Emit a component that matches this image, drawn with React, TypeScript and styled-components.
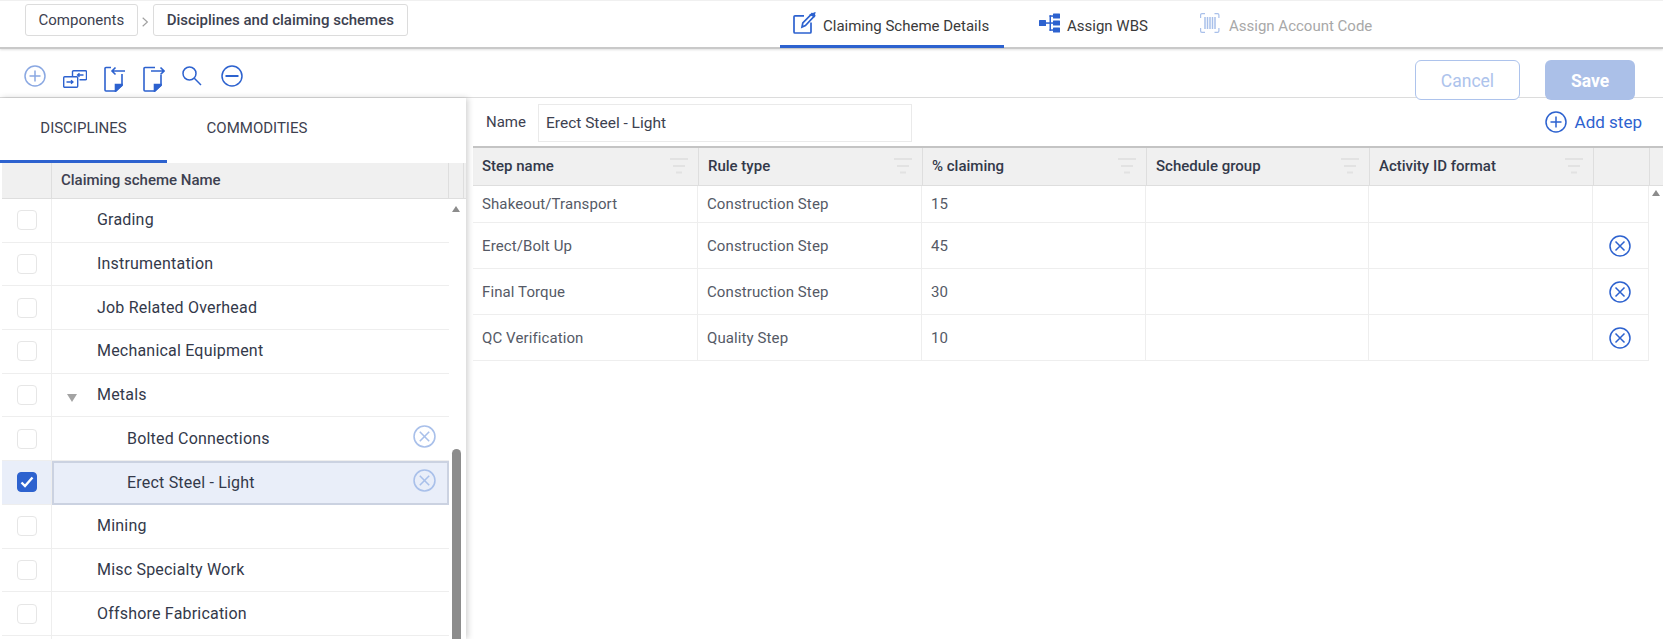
import styled, { createGlobalStyle } from 'styled-components';

const Global = createGlobalStyle`
  html, body {
    margin: 0;
    padding: 0;
    height: 100%;
    overflow: hidden;
    background: #fff;
    font-family: Roboto, 'Liberation Sans', sans-serif;
    color: #333;
  }
  * { box-sizing: border-box; }
  svg { flex: none; }
`;

const Page = styled.div`
  width: 1663px;
  height: 639px;
  overflow: hidden;
  display: flex;
  flex-direction: column;
`;

const TopBar = styled.div`
  height: 49px;
  flex: none;
  display: flex;
  align-items: flex-start;
  padding-left: 25px;
  background: #fff;
  border-top: 1px solid #f0f0f0;
  border-bottom: 2px solid #c9c9c9;
  box-shadow: 0 1px 2px rgba(0, 0, 0, 0.12);
  position: relative;
  z-index: 3;
`;

const Crumbs = styled.div`
  width: 383px;
  display: flex;
  align-items: center;
  margin-top: 3px;
`;

const Crumb = styled.div<{ $current?: boolean }>`
  height: 32px;
  padding: 0 ${p => (p.$current ? 13 : 12.5)}px;
  display: flex;
  align-items: center;
  font-size: 15px;
  font-weight: ${p => (p.$current ? 500 : 400)};
  color: #3d4150;
  border: 1px solid #dcdcdc;
  border-radius: 3px;
  white-space: nowrap;
`;

const CrumbArrow = styled.svg`
  width: 15px;
  height: 12px;
  margin-top: 4px;
`;

const Tabs = styled.div`
  margin-left: 372px;
  display: flex;
  height: 47px;
`;

const Tab = styled.div<{ $active?: boolean; $disabled?: boolean; $width: number; $pad: number }>`
  width: ${p => p.$width}px;
  height: 47px;
  padding: 5px 0 0 ${p => p.$pad}px;
  display: flex;
  align-items: center;
  gap: 7px;
  font-size: 15px;
  color: ${p => (p.$disabled ? '#a8a8a8' : '#3a3a3a')};
  border-bottom: 3px solid ${p => (p.$active ? '#2d62cf' : 'transparent')};
  white-space: nowrap;
`;

const Toolbar = styled.div`
  height: 49px;
  flex: none;
  display: flex;
  align-items: flex-start;
  padding: 12px 28px 0 24px;
  border-bottom: 1px solid #dcdcdc;
`;

const ToolIcons = styled.div`
  display: flex;
  align-items: center;
  gap: 17px;
  height: 30px;

  & > svg:last-child {
    margin-left: 2px;
  }
`;

const Actions = styled.div`
  margin: -1px 0 0 auto;
  display: flex;
  gap: 25px;
  position: relative;
  z-index: 2;
`;

const Cancel = styled.div`
  width: 105px;
  height: 40px;
  padding-top: 1px;
  display: flex;
  align-items: center;
  justify-content: center;
  border: 1px solid #adc3ec;
  border-radius: 6px;
  background: #fff;
  color: #adc3ec;
  font-size: 17.500px;
`;

const Save = styled.div`
  width: 90px;
  height: 40px;
  padding-top: 1px;
  display: flex;
  align-items: center;
  justify-content: center;
  border-radius: 6px;
  background: #abc0e8;
  color: #fff;
  font-size: 17.500px;
  font-weight: 700;
`;

const Main = styled.div`
  flex: 1;
  min-height: 0;
  display: flex;
`;

const LeftPanel = styled.div`
  width: 466px;
  flex: none;
  background: #fff;
  box-shadow: 2px 0 6px rgba(0, 0, 0, 0.18);
  position: relative;
  overflow: hidden;
`;

const SideTabs = styled.div`
  height: 65px;
  display: flex;
`;

const SideTab = styled.div<{ $active?: boolean; $width: number }>`
  width: ${p => p.$width}px;
  display: flex;
  align-items: center;
  justify-content: center;
  padding-bottom: 3px;
  font-size: 15px;
  color: #3d4150;
  border-bottom: 3px solid ${p => (p.$active ? '#2d62cf' : 'transparent')};
`;

const TreeHead = styled.div`
  height: 36px;
  margin-left: 2px;
  display: grid;
  grid-template-columns: 50px 397px 15px;
  background: #f0f0f0;
  border-bottom: 1px solid #dedede;
  font-size: 15px;
  font-weight: 500;
  color: #3d4150;
`;

const HeadCell = styled.div`
  display: flex;
  align-items: center;
  padding: 0 0 1px 9px;
  border-right: 1px solid #dedede;
`;

const TreeBody = styled.div`
  display: flex;
  margin-left: 2px;
`;

const TreeRows = styled.div`
  width: 447px;
`;

const TreeRow = styled.div<{ $selected?: boolean }>`
  height: 43.700px;
  display: grid;
  grid-template-columns: 50px 1fr;
  background: ${p => (p.$selected ? '#e9eef9' : '#fff')};
  border-bottom: 1px solid #eeeeee;
`;

const CheckCell = styled.div`
  display: flex;
  align-items: center;
  justify-content: center;
  border-right: 1px solid #eeeeee;
`;

const Check = styled.div<{ $checked?: boolean }>`
  width: 20px;
  height: 20px;
  border-radius: 4px;
  display: flex;
  align-items: center;
  justify-content: center;
  border: 1px solid ${p => (p.$checked ? '#2d62cf' : '#e6e6e6')};
  background: ${p => (p.$checked ? '#2d62cf' : '#fff')};
`;

const NameCell = styled.div<{ $level: number; $selected?: boolean }>`
  display: flex;
  align-items: center;
  position: relative;
  padding: 0 0 1px ${p => 45 + p.$level * 30 - (p.$selected ? 2 : 0)}px;
  font-size: 16px;
  letter-spacing: 0.2px;
  color: #33394a;
  ${p => p.$selected && 'border: 2px solid #cbd2e1; margin-bottom: -1px;'}
`;

const Caret = styled.span`
  position: absolute;
  left: 15px;
  top: 20px;
  width: 0;
  height: 0;
  border-left: 5px solid transparent;
  border-right: 5px solid transparent;
  border-top: 8px solid #a3a3a3;
`;

const RemoveSlot = styled.span<{ $selected?: boolean }>`
  position: absolute;
  right: ${p => (p.$selected ? 11 : 13)}px;
  top: ${p => (p.$selected ? 6 : 8)}px;
  display: flex;
`;

const ScrollTrack = styled.div`
  flex: 1;
  position: relative;
  height: 450px;
`;

const ScrollArrow = styled.span<{ $top: number; $left: number }>`
  position: absolute;
  top: ${p => p.$top}px;
  left: ${p => p.$left}px;
  width: 0;
  height: 0;
  border-left: 4px solid transparent;
  border-right: 4px solid transparent;
  border-bottom: 6px solid #8c8c8c;
`;

const ScrollThumb = styled.span`
  position: absolute;
  left: 3px;
  top: 250px;
  width: 9px;
  height: 200px;
  border-radius: 5px 5px 0 0;
  background: #8c8c8c;
`;

const RightPanel = styled.div`
  flex: 1;
  min-width: 0;
  margin-left: 7px;
  display: flex;
  flex-direction: column;
`;

const NameRow = styled.div`
  height: 50px;
  display: flex;
  align-items: flex-start;
  padding: 6px 21px 0 0;
  border-bottom: 2px solid #c4c4c4;
`;

const NameLabel = styled.label`
  width: 65px;
  padding: 9px 0 0 13px;
  font-size: 15px;
  color: #3d4150;
`;

const NameInput = styled.div`
  width: 374px;
  height: 38px;
  display: flex;
  align-items: center;
  padding-left: 7px;
  border: 1px solid #eaeaea;
  font-size: 15.500px;
  color: #3d4150;
`;

const AddStep = styled.div`
  margin-left: auto;
  margin-top: 7px;
  display: flex;
  align-items: center;
  gap: 8px;
  font-size: 17px;
  color: #2d62cf;
`;

const GridHead = styled.div`
  height: 38px;
  display: grid;
  grid-template-columns: 226px 224px 224px 223px 224px 56px 1fr;
  background: #f0f0f0;
  border-bottom: 1px solid #dedede;
  font-size: 15px;
  font-weight: 500;
  color: #33394a;
`;

const GridHeadCell = styled.div`
  display: flex;
  align-items: center;
  justify-content: space-between;
  padding: 0 10px 1px 9px;
  border-right: 1px solid #dedede;
`;

const GridBody = styled.div`
  position: relative;
`;

const StepRow = styled.div<{ $height: number }>`
  height: ${p => p.$height}px;
  width: 1176px;
  display: grid;
  grid-template-columns: 225px 224px 224px 223px 224px 56px;
  border-bottom: 1px solid #eeeeee;
  font-size: 15px;
  letter-spacing: 0.1px;
  color: #555a66;
`;

const StepCell = styled.div`
  display: flex;
  align-items: center;
  padding-left: 9px;
  border-right: 1px solid #eeeeee;
`;

const RowAction = styled(StepCell)`
  justify-content: center;
  padding: 0 2px 0 0;
`;

const steps = [
  { name: 'Shakeout/Transport', rule: 'Construction Step', pct: '15', removable: false },
  { name: 'Erect/Bolt Up', rule: 'Construction Step', pct: '45', removable: true },
  { name: 'Final Torque', rule: 'Construction Step', pct: '30', removable: true },
  { name: 'QC Verification', rule: 'Quality Step', pct: '10', removable: true },
];

const tree = [
  { name: 'Grading', level: 0 },
  { name: 'Instrumentation', level: 0 },
  { name: 'Job Related Overhead', level: 0 },
  { name: 'Mechanical Equipment', level: 0 },
  { name: 'Metals', level: 0, caret: true },
  { name: 'Bolted Connections', level: 1, removable: true },
  { name: 'Erect Steel - Light', level: 1, removable: true, selected: true },
  { name: 'Mining', level: 0 },
  { name: 'Misc Specialty Work', level: 0 },
  { name: 'Offshore Fabrication', level: 0 },
  { name: '', level: 0 },
];

const BLUE = '#2d62cf';

function CircleIcon({ kind, color = BLUE, size = 22 }: { kind: 'plus' | 'minus' | 'x'; color?: string; size?: number }) {
  return (
    <svg width={size} height={size} viewBox="0 0 22 22" fill="none" stroke={color} strokeWidth="1.5">
      <circle cx="11" cy="11" r="10" />
      {kind === 'plus' && <path d="M11 5.500v11M5.500 11h11" />}
      {kind === 'minus' && <path d="M4.500 11h13" strokeWidth="2" />}
      {kind === 'x' && <path d="M6.500 6.500l9 9M15.500 6.500l-9 9" />}
    </svg>
  );
}

function FilterIcon() {
  return (
    <svg width="18" height="16" viewBox="0 0 18 16" fill="none" stroke="#e2e2e2" strokeWidth="2">
      <path d="M0 1h18M3 8h12M6 14.500h6" />
    </svg>
  );
}

function DocIcon({ out }: { out?: boolean }) {
  return (
    <svg width="22" height="26" viewBox="0 0 22 26" fill="none" stroke={BLUE} strokeWidth="1.6" style={{ marginTop: 6 }}>
      {out ? (
        <path d="M12 1.500H2a1 1 0 0 0-1 1V24a1 1 0 0 0 1 1h10l6-6V9" />
      ) : (
        <path d="M7 1.500H2a1 1 0 0 0-1 1V24a1 1 0 0 0 1 1h10l6-6V8" />
      )}
      {out ? (
        <path d="M8 5h13M17.500 1.500L21 5l-3.500 3.500" />
      ) : (
        <path d="M21 5H8M11.500 1.500L8 5l3.500 3.500" />
      )}
      <path d="M11.500 25v-6.500H18v1z" fill={BLUE} />
    </svg>
  );
}

function TransferIcon() {
  return (
    <svg width="24" height="18" viewBox="0 0 24 18" fill="none" stroke={BLUE} strokeWidth="1.400" style={{ marginTop: 6 }}>
      <path d="M9.500 6V1.700a1 1 0 0 1 1-1h12a1 1 0 0 1 1 1v7a1 1 0 0 1-1 1h-6" />
      <rect x="0.700" y="6.700" width="14" height="10.600" rx="1" />
      <path d="M20.500 5h-6M16.500 3.200L14.500 5l2 1.800" strokeWidth="1.300" />
      <path d="M3.500 12h6.500M8 10.200l2 1.800-2 1.800" strokeWidth="1.300" />
    </svg>
  );
}

function SearchIcon() {
  return (
    <svg width="20" height="20" viewBox="0 0 20 20" fill="none" stroke={BLUE} strokeWidth="1.500">
      <circle cx="7.500" cy="7.500" r="6.500" />
      <path d="M12.300 12.300L19 19" />
    </svg>
  );
}

function EditIcon() {
  return (
    <svg width="23" height="22" viewBox="0 0 23 22" fill="none" stroke={BLUE} strokeWidth="1.700" style={{ marginTop: -5 }}>
      <path d="M11 3.800H2a1 1 0 0 0-1 1V20a1 1 0 0 0 1 1h15a1 1 0 0 0 1-1v-9.500" />
      <path d="M9 15l.8-4L19 1.600l2.600 2.200-9.200 9.700z" />
      <path d="M18 2.700l3.500-1.500-.6 3z" fill={BLUE} />
    </svg>
  );
}

function WbsIcon() {
  return (
    <svg width="21" height="20" viewBox="0 0 21 20" fill={BLUE} style={{ marginTop: -5 }}>
      <rect x="0" y="7" width="7" height="6" rx="0.500" />
      <rect x="14" y="0.500" width="7" height="5" rx="0.500" />
      <rect x="14" y="7.500" width="7" height="5" rx="0.500" />
      <rect x="14" y="14.500" width="7" height="5" rx="0.500" />
      <rect x="7" y="9.300" width="7" height="1.500" />
      <rect x="10.500" y="2.300" width="1.500" height="15.500" />
      <rect x="10.500" y="2.300" width="3.500" height="1.500" />
      <rect x="10.500" y="16.300" width="3.500" height="1.500" />
    </svg>
  );
}

function BarcodeIcon() {
  return (
    <svg width="22" height="20" viewBox="0 0 22 20" fill="none" stroke="#a9c0ea" strokeWidth="1.200" style={{ marginTop: -5 }}>
      <path d="M0.600 5V2a1.400 1.400 0 0 1 1.400-1.400h3M14.500 0.600h3a1.400 1.400 0 0 1 1.400 1.400v3M0.600 15v3a1.400 1.400 0 0 0 1.400 1.400h3M14.500 19.400h3a1.400 1.400 0 0 0 1.400-1.400v-3" />
      <path d="M5 4v12M7.500 4v12M10 4v12M12.500 4v12M15 4v12" strokeWidth="1.500" />
    </svg>
  );
}

function App() {
  return (
    <Page>
      <Global />
      <TopBar>
        <Crumbs>
          <Crumb>Components</Crumb>
          <CrumbArrow viewBox="0 0 16 12" fill="none" stroke="#a0a0a0" strokeWidth="1.200">
            <path d="M5 1.500l5 4.500-5 4.500" />
          </CrumbArrow>
          <Crumb $current>Disciplines and claiming schemes</Crumb>
        </Crumbs>
        <Tabs>
          <Tab $active $width={224} $pad={13}><EditIcon />Claiming Scheme Details</Tab>
          <Tab $width={160} $pad={35}><WbsIcon />Assign WBS</Tab>
          <Tab $disabled $width={200} $pad={36}><BarcodeIcon />Assign Account Code</Tab>
        </Tabs>
      </TopBar>
      <Toolbar>
        <ToolIcons>
          <CircleIcon kind="plus" color="#8aa8e2" />
          <TransferIcon />
          <DocIcon />
          <DocIcon out />
          <SearchIcon />
          <CircleIcon kind="minus" />
        </ToolIcons>
        <Actions>
          <Cancel>Cancel</Cancel>
          <Save>Save</Save>
        </Actions>
      </Toolbar>
      <Main>
        <LeftPanel>
          <SideTabs>
            <SideTab $active $width={167}>DISCIPLINES</SideTab>
            <SideTab $width={180}>COMMODITIES</SideTab>
          </SideTabs>
          <TreeHead>
            <HeadCell />
            <HeadCell>Claiming scheme Name</HeadCell>
            <HeadCell />
          </TreeHead>
          <TreeBody>
            <TreeRows>
              {tree.map((row, i) => (
                <TreeRow key={i} $selected={row.selected}>
                  <CheckCell>
                    <Check $checked={row.selected}>
                      {row.selected && (
                        <svg width="14" height="12" viewBox="0 0 14 12" fill="none" stroke="#fff" strokeWidth="2.400">
                          <path d="M1.500 6.500l3.500 3.500 7.500-8.500" />
                        </svg>
                      )}
                    </Check>
                  </CheckCell>
                  <NameCell $level={row.level} $selected={row.selected}>
                    {row.caret && <Caret />}
                    {row.name}
                    {row.removable && (
                      <RemoveSlot $selected={row.selected}>
                        <CircleIcon kind="x" color="#a9c0ea" size={23} />
                      </RemoveSlot>
                    )}
                  </NameCell>
                </TreeRow>
              ))}
            </TreeRows>
            <ScrollTrack>
              <ScrollArrow $top={7} $left={3} />
              <ScrollThumb />
            </ScrollTrack>
          </TreeBody>
        </LeftPanel>
        <RightPanel>
          <NameRow>
            <NameLabel>Name</NameLabel>
            <NameInput>Erect Steel - Light</NameInput>
            <AddStep><CircleIcon kind="plus" />Add step</AddStep>
          </NameRow>
          <GridHead>
            <GridHeadCell>Step name<FilterIcon /></GridHeadCell>
            <GridHeadCell>Rule type<FilterIcon /></GridHeadCell>
            <GridHeadCell>% claiming<FilterIcon /></GridHeadCell>
            <GridHeadCell>Schedule group<FilterIcon /></GridHeadCell>
            <GridHeadCell>Activity ID format<FilterIcon /></GridHeadCell>
            <GridHeadCell />
          </GridHead>
          <GridBody>
            {steps.map((s, i) => (
              <StepRow key={s.name} $height={i === 0 ? 37 : 46}>
                <StepCell>{s.name}</StepCell>
                <StepCell>{s.rule}</StepCell>
                <StepCell>{s.pct}</StepCell>
                <StepCell />
                <StepCell />
                <RowAction>{s.removable && <CircleIcon kind="x" />}</RowAction>
              </StepRow>
            ))}
            <ScrollArrow $top={4} $left={1179} />
          </GridBody>
        </RightPanel>
      </Main>
    </Page>
  );
}

export default App;
